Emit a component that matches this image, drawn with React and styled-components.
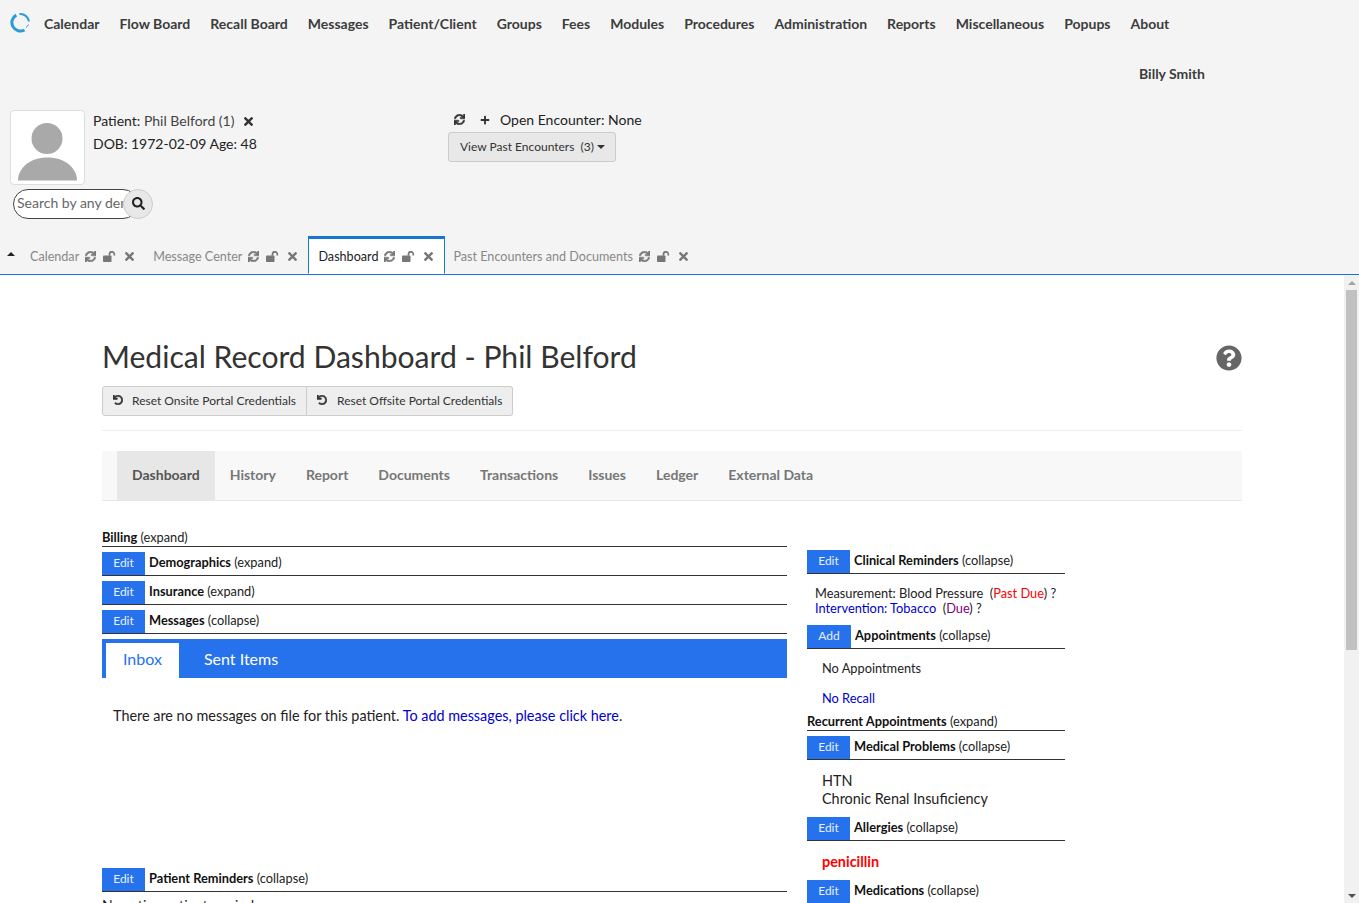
import React from "react";
import styled, { createGlobalStyle } from "styled-components";
import { FaSync, FaTimes, FaPlus, FaSearch, FaUndo, FaQuestionCircle } from "react-icons/fa";

const GlobalStyle = createGlobalStyle`
  html, body {
    margin: 0;
    padding: 0;
    height: 903px;
    overflow: hidden;
    background: #fff;
    font-family: Lato, "Liberation Sans", sans-serif;
    color: #1a1a1a;
  }
  * { box-sizing: border-box; }
`;

const menu = [
  "Calendar", "Flow Board", "Recall Board", "Messages", "Patient/Client", "Groups", "Fees",
  "Modules", "Procedures", "Administration", "Reports", "Miscellaneous", "Popups", "About",
];

const topTabs = [
  { label: "Calendar" },
  { label: "Message Center" },
  { label: "Dashboard", active: true },
  { label: "Past Encounters and Documents" },
];

const subTabs = ["Dashboard", "History", "Report", "Documents", "Transactions", "Issues", "Ledger", "External Data"];

const Logo = () => (
  <svg width="21" height="21" viewBox="0 0 21 21" fill="none">
    <path d="M6.300 3.100A8.500 8.500 0 0 0 14.500 18" stroke="#2a9bd8" strokeWidth="3" />
    <path d="M9.500 2.100A8.500 8.500 0 0 1 18.900 9.500" stroke="#2a9bd8" strokeWidth="2" />
    <path d="M16 15.500A7.500 7.500 0 0 0 18.500 12.500" stroke="#2a9bd8" strokeWidth="1" />
  </svg>
);

const Avatar = () => (
  <svg width="59" height="58" viewBox="0 0 59 58">
    <circle cx="29" cy="15.500" r="15.500" fill="#a9a9a9" />
    <path d="M0 57.500C0 45 12 34.500 29.500 34.500S59 45 59 57.500z" fill="#a9a9a9" />
  </svg>
);

// open padlock, the shackle stands up on the right of the body
const OpenLock = () => (
  <svg width="13" height="11" viewBox="0 0 13 11">
    <rect x="0" y="4.500" width="8.500" height="6.500" rx="0.800" fill="currentColor" />
    <path d="M6.500 4.800V3.200a2.400 2.400 0 0 1 4.800 0V4.500" fill="none" stroke="currentColor" strokeWidth="1.700" />
  </svg>
);

const SectionHeader = ({ button, title, state }) => (
  <Header>
    {button && <EditButton $wide={button === "Add"}>{button}</EditButton>}
    <HeaderText $hasButton={!!button}>
      <b>{title}</b> ({state})
    </HeaderText>
  </Header>
);

export default function App() {
  return (
    <>
      <GlobalStyle />
      <TopArea>
        <NavBar>
          <LogoWrap><Logo /></LogoWrap>
          {menu.map((m) => (
            <NavItem key={m}>{m}</NavItem>
          ))}
        </NavBar>
        <UserName>Billy Smith</UserName>
        <PatientRow>
          <PatientColumn>
            <PatientTop>
              <Photo><Avatar /></Photo>
              <PatientInfo>
                <div>
                  Patient: <PatientName>Phil Belford (1)</PatientName>
                  <CloseIcon><FaTimes /></CloseIcon>
                </div>
                <div>DOB: 1972-02-09 Age: 48</div>
              </PatientInfo>
            </PatientTop>
            <SearchBox>
              <SearchInput placeholder="Search by any demographics" readOnly />
              <SearchButton><FaSearch /></SearchButton>
            </SearchBox>
          </PatientColumn>
          <EncounterColumn>
            <EncounterLine>
              <RefreshIcon $color="#333" />
              <FaPlus size={10} color="#333" />
              <span>Open Encounter: None</span>
            </EncounterLine>
            <PastButton>
              View Past Encounters&nbsp; (3)
              <Caret />
            </PastButton>
          </EncounterColumn>
        </PatientRow>
        <TabStrip>
          <TabToggle />
          {topTabs.map((t) => (
            <TopTab key={t.label} $active={t.active}>
              <span>{t.label}</span>
              <TabIcons>
                <RefreshIcon $color="#777" />
                <OpenLock />
                <FaTimes />
              </TabIcons>
            </TopTab>
          ))}
        </TabStrip>
      </TopArea>

      <FrameRow>
        <Frame>
          <TitleRow>
            <Title>Medical Record Dashboard - Phil Belford</Title>
            <HelpIcon><FaQuestionCircle /></HelpIcon>
          </TitleRow>
          <ButtonGroup>
            <GroupButton><FaUndo /> Reset Onsite Portal Credentials</GroupButton>
            <GroupButton><FaUndo /> Reset Offsite Portal Credentials</GroupButton>
          </ButtonGroup>
          <Rule />
          <SubNav>
            {subTabs.map((s, i) => (
              <SubNavItem key={s} $active={i === 0}>{s}</SubNavItem>
            ))}
          </SubNav>
          <Columns>
            <LeftColumn>
              <SectionHeader title="Billing" state="expand" />
              <SectionHeader button="Edit" title="Demographics" state="expand" />
              <SectionHeader button="Edit" title="Insurance" state="expand" />
              <SectionHeader button="Edit" title="Messages" state="collapse" />
              <MessageTabs>
                <MessageTab $active>Inbox</MessageTab>
                <MessageTab>Sent Items</MessageTab>
              </MessageTabs>
              <MessageBody>
                There are no messages on file for this patient. <BlueLink>To add messages, please click here</BlueLink>.
              </MessageBody>
              <SectionHeader button="Edit" title="Patient Reminders" state="collapse" />
              <Reminder>No active patient reminders.</Reminder>
            </LeftColumn>
            <RightColumn>
              <SectionHeader button="Edit" title="Clinical Reminders" state="collapse" />
              <ReminderList>
                <div>Measurement: Blood Pressure&nbsp; (<RedText>Past Due</RedText>) ?</div>
                <div><BlueLink>Intervention: Tobacco</BlueLink>&nbsp; (<PurpleText>Due</PurpleText>) ?</div>
              </ReminderList>
              <SectionHeader button="Add" title="Appointments" state="collapse" />
              <Plain $top={11} $bottom={14}>No Appointments</Plain>
              <Plain $bottom={6}><BlueLink>No Recall</BlueLink></Plain>
              <SectionHeader title="Recurrent Appointments" state="expand" />
              <SectionHeader button="Edit" title="Medical Problems" state="collapse" />
              <Problems>
                <div>HTN</div>
                <div>Chronic Renal Insuficiency</div>
              </Problems>
              <SectionHeader button="Edit" title="Allergies" state="collapse" />
              <Allergy>penicillin</Allergy>
              <SectionHeader button="Edit" title="Medications" state="collapse" />
            </RightColumn>
          </Columns>
        </Frame>
        <ScrollBar>
          <ArrowUp />
          <ScrollThumb />
          <ArrowDown />
        </ScrollBar>
      </FrameRow>
    </>
  );
}

const RefreshIcon = styled(FaSync)`
  font-size: 11px;
  color: ${(p) => p.$color};
  stroke: currentColor;
  stroke-width: 24;
`;
const TopArea = styled.div`
  height: 275px;
  background: #f4f4f4;
  border-bottom: 1px solid #1976d2;
  display: flex;
  flex-direction: column;
`;
const NavBar = styled.nav`
  display: flex;
  align-items: center;
  height: 47px;
  padding: 0 0 0 10px;
  gap: 20px;
`;
const LogoWrap = styled.div`
  width: 21px;
  height: 21px;
  margin-right: -7px;
  margin-top: -1px;
`;
const NavItem = styled.a`
  font-size: 14px;
  font-weight: 700;
  color: #3c3c3c;
`;
const UserName = styled.div`
  height: 63px;
  padding: 18px 0 0 1139px;
  font-size: 14px;
  font-weight: 700;
  color: #3c3c3c;
`;
const PatientRow = styled.div`
  display: flex;
  height: 127px;
`;
const PatientColumn = styled.div`
  width: 448px;
  padding-left: 10px;
`;
const PatientTop = styled.div`
  display: flex;
  gap: 8px;
`;
const Photo = styled.div`
  width: 75px;
  height: 75px;
  background: #fff;
  border: 1px solid #ddd;
  border-radius: 4px;
  padding: 12px 7px 0 7px;
  overflow: hidden;
`;
const PatientInfo = styled.div`
  font-size: 14px;
  line-height: 23px;
  margin-top: -1px;
  color: #222;
`;
const PatientName = styled.span`
  color: #444;
`;
const CloseIcon = styled.span`
  display: inline-block;
  margin-left: 10px;
  line-height: 0;
  color: #333;
  vertical-align: -2px;
  svg { width: 9px; height: 13px; }
`;
const SearchBox = styled.div`
  display: flex;
  margin: 4px 0 0 3px;
`;
const SearchInput = styled.input`
  width: 125px;
  height: 30px;
  border: 1px solid #444;
  border-radius: 15px;
  padding: 0 0 3px 3px;
  font: 14px Lato, sans-serif;
  background: #fff;
  outline: none;
  &::placeholder { color: #666; opacity: 1; }
`;
const SearchButton = styled.div`
  width: 30px;
  height: 30px;
  margin-left: -15px;
  border-radius: 50%;
  border: 1px solid #ccc;
  background: #e8e8e8;
  display: flex;
  align-items: center;
  justify-content: center;
  font-size: 13px;
  color: #222;
  z-index: 1;
`;
const EncounterColumn = styled.div`
  display: flex;
  flex-direction: column;
  align-items: flex-start;
`;
const EncounterLine = styled.div`
  display: flex;
  align-items: center;
  gap: 15px;
  height: 22px;
  padding: 0 0 2px 6px;
  font-size: 14px;
  color: #222;
  span { margin-left: -5px; }
`;
const PastButton = styled.div`
  display: flex;
  align-items: center;
  height: 30px;
  padding: 0 10px 1px 11px;
  background: #e8e8e8;
  border: 1px solid #ccc;
  border-radius: 3px;
  font-size: 12px;
  color: #333;
`;
const Caret = styled.i`
  width: 0;
  height: 0;
  margin: 2px 0 0 3px;
  border-left: 4px solid transparent;
  border-right: 4px solid transparent;
  border-top: 4px solid #333;
`;
const TabStrip = styled.div`
  display: flex;
  height: 38px;
  align-items: stretch;
`;
const TabToggle = styled.i`
  width: 0;
  height: 0;
  margin: 16px 6px 0 7px;
  border-left: 4px solid transparent;
  border-right: 4px solid transparent;
  border-bottom: 4px solid #222;
`;
const TopTab = styled.div`
  display: flex;
  align-items: center;
  gap: 6px;
  height: 38px;
  padding: 0 ${(p) => (p.$active ? "11px 0 9px" : "9px 0 8px")};
  margin: 0 ${(p) => (p.$active ? "-1px 0 1px" : "0")};
  font-size: 12.600px;
  color: ${(p) => (p.$active ? "#222" : "#888")};
  background: ${(p) => (p.$active ? "#fff" : "transparent")};
  border: 1px solid ${(p) => (p.$active ? "#1976d2" : "transparent")};
  border-top: 3px solid ${(p) => (p.$active ? "#1976d2" : "transparent")};
  border-bottom: 1px solid ${(p) => (p.$active ? "#fff" : "transparent")};
`;
const TabIcons = styled.span`
  display: inline-flex;
  align-items: center;
  gap: 7px;
  color: #777;
  svg:last-child { width: 9px; height: 13px; margin-left: 2px; }
`;
const FrameRow = styled.div`
  display: flex;
  height: 628px;
`;
const Frame = styled.main`
  flex: 1;
  padding: 0 102px;
  overflow: hidden;
  background: #fff;
`;
const TitleRow = styled.div`
  display: flex;
  justify-content: space-between;
  align-items: center;
  height: 40px;
  margin-top: 63px;
`;
const Title = styled.h2`
  margin: 0 0 5px;
  font-size: 30.100px;
  font-weight: 400;
  color: #333;
`;
const HelpIcon = styled.span`
  font-size: 26px;
  color: #666;
  display: flex;
`;
const ButtonGroup = styled.div`
  display: flex;
  width: fit-content;
  margin-top: 8px;
`;
const GroupButton = styled.div`
  display: flex;
  align-items: center;
  gap: 10px;
  height: 30px;
  padding: 0 10px 2px;
  background: #eee;
  border: 1px solid #ccc;
  font-size: 12px;
  color: #333;
  svg { font-size: 10px; stroke: currentColor; stroke-width: 30; }
  &:first-child { border-radius: 3px 0 0 3px; gap: 9px; }
  &:last-child { border-radius: 0 3px 3px 0; border-left: 0; }
`;
const Rule = styled.hr`
  margin: 14px 0 20px;
  border: 0;
  border-top: 1px solid #eee;
`;
const SubNav = styled.div`
  display: flex;
  height: 50px;
  padding-left: 15px;
  background: #f8f8f8;
  border-bottom: 1px solid #e7e7e7;
`;
const SubNavItem = styled.a`
  display: flex;
  align-items: center;
  padding: 0 15px 2px;
  font-size: 14px;
  font-weight: 700;
  color: ${(p) => (p.$active ? "#555" : "#777")};
  background: ${(p) => (p.$active ? "#e7e7e7" : "transparent")};
`;
const Columns = styled.div`
  display: flex;
  gap: 20px;
`;
const LeftColumn = styled.div`
  width: 685px;
  padding-top: 27px;
`;
const RightColumn = styled.div`
  width: 258px;
  padding-top: 49px;
`;
const Header = styled.div`
  display: flex;
  align-items: flex-end;
  border-bottom: 1px solid #333;
  margin-bottom: 5px;
`;
const EditButton = styled.div`
  width: ${(p) => (p.$wide ? "44px" : "43px")};
  height: 23px;
  padding-bottom: 2px;
  background: #2672ec;
  color: #e8f0ff;
  font-size: 12px;
  display: flex;
  align-items: center;
  justify-content: center;
`;
const HeaderText = styled.div`
  padding-left: ${(p) => (p.$hasButton ? "4px" : "0")};
  padding-bottom: ${(p) => (p.$hasButton ? "2px" : "0")};
  font-size: 12.800px;
  line-height: ${(p) => (p.$hasButton ? "21px" : "18px")};
  color: #222;
  b { color: #111; }
`;
const MessageTabs = styled.div`
  display: flex;
  align-items: flex-end;
  height: 39px;
  margin-top: 1px;
  padding-left: 4px;
  background: #2672ec;
`;
const MessageTab = styled.div`
  display: flex;
  align-items: center;
  height: 35px;
  padding: 0 ${(p) => (p.$active ? "17px" : "25px")} 5px;
  font-size: 16px;
  color: ${(p) => (p.$active ? "#2672ec" : "#fff")};
  background: ${(p) => (p.$active ? "#fff" : "transparent")};
`;
const MessageBody = styled.div`
  height: 190px;
  padding: 29px 0 0 11px;
  font-size: 14.400px;
  color: #222;
`;
const BlueLink = styled.a`
  color: #0000cc;
`;
const Reminder = styled.div`
  font-size: 14px;
  margin-top: -1px;
`;
const ReminderList = styled.div`
  padding: 7px 0 9px 8px;
  font-size: 12.800px;
  line-height: 15px;
  color: #222;
`;
const RedText = styled.span`
  color: #ff0000;
`;
const PurpleText = styled.span`
  color: #800080;
`;
const Plain = styled.div`
  padding-left: 15px;
  margin-top: ${(p) => p.$top || 0}px;
  margin-bottom: ${(p) => p.$bottom || 0}px;
  font-size: 12.800px;
  line-height: 16px;
  color: #222;
`;
const Problems = styled.div`
  padding: 7px 0 9px 15px;
  font-size: 14.400px;
  line-height: 18px;
  color: #222;
`;
const Allergy = styled.div`
  padding: 7px 0 9px 15px;
  font-size: 14.400px;
  line-height: 18px;
  font-weight: 700;
  color: #ff0000;
`;
const ScrollBar = styled.div`
  width: 15px;
  background: #f1f1f1;
  display: flex;
  flex-direction: column;
  align-items: center;
`;
const ArrowUp = styled.i`
  width: 0;
  height: 0;
  margin: 6px 0 5px;
  border-left: 4px solid transparent;
  border-right: 4px solid transparent;
  border-bottom: 4px solid #a3a3a3;
`;
const ScrollThumb = styled.div`
  width: 11px;
  height: 360px;
  background: #c1c1c1;
`;
const ArrowDown = styled.i`
  width: 0;
  height: 0;
  margin-top: auto;
  margin-bottom: 5px;
  border-left: 4px solid transparent;
  border-right: 4px solid transparent;
  border-top: 4px solid #505050;
`;
